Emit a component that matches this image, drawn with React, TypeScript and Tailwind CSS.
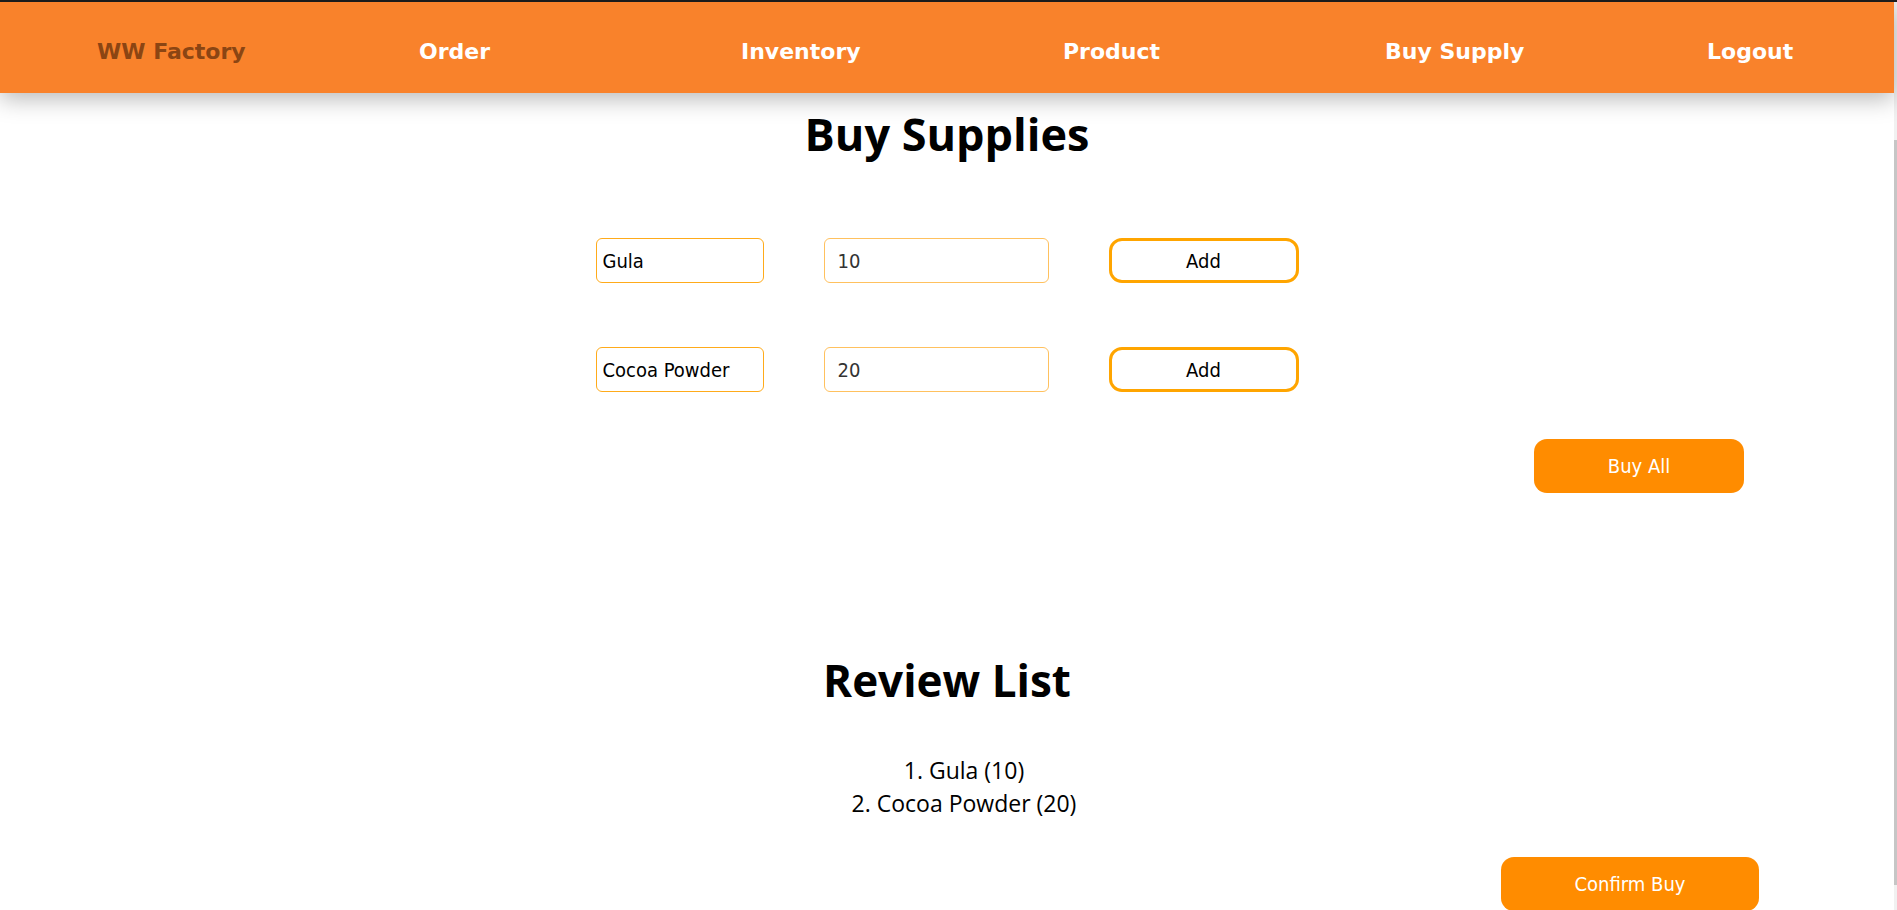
import { useState } from "react";

const links = ["Order", "Inventory", "Product", "Buy Supply", "Logout"];

export default function App() {
  const [name1, setName1] = useState("Gula");
  const [qty1, setQty1] = useState("10");
  const [name2, setName2] = useState("Cocoa Powder");
  const [qty2, setQty2] = useState("20");

  const rows = [
    { name: name1, setName: setName1, qty: qty1, setQty: setQty1 },
    { name: name2, setName: setName2, qty: qty2, setQty: setQty2 },
  ];

  return (
    <div className="h-screen overflow-hidden flex flex-col bg-white">
      <div className="h-[2px] bg-[#1e1e1e] shrink-0" />
      <div className="flex flex-1 min-h-0">
        <main className="flex-1 min-w-0 flex flex-col">
          {/* navbar */}
          <nav className="relative z-10 h-[91px] shrink-0 bg-[#f9822b] shadow-[0_6px_22px_rgba(0,0,0,0.28)] flex items-center pt-[8px] pl-[97px] overflow-hidden font-['DejaVu_Sans',sans-serif] text-[22px] font-bold">
            <a className="w-[322px] shrink-0 text-[#8b4513]">WW Factory</a>
            {links.map((l) => (
              <a key={l} className="w-[322px] shrink-0 text-white">
                {l}
              </a>
            ))}
          </nav>

          <h1 className="mt-[18px] text-center text-[45px] leading-none font-bold text-black font-['Open_Sans',sans-serif]">
            Buy Supplies
          </h1>

          <div className="mt-[82px] flex flex-col gap-[64px] font-['DejaVu_Sans_Condensed','DejaVu_Sans',sans-serif] text-[20px]">
            {rows.map((r, i) => (
              <div key={i} className="flex justify-center gap-[60px]">
                <input
                  className="w-[168px] h-[45px] rounded-[6px] border border-[#ffab1a] px-[6px] text-black outline-none"
                  value={r.name}
                  onChange={(e) => r.setName(e.target.value)}
                />
                <input
                  className="w-[225px] h-[45px] rounded-[6px] border border-[#ffc15e] px-[13px] text-[#333] outline-none"
                  value={r.qty}
                  onChange={(e) => r.setQty(e.target.value)}
                />
                <button className="w-[190px] h-[45px] rounded-[13px] border-[3px] border-[#ffa500] bg-white text-black">
                  Add
                </button>
              </div>
            ))}
          </div>

          <div className="mt-[47px] flex justify-end pr-[150px]">
            <button className="w-[210px] h-[54px] rounded-[13px] bg-[#ff8c00] text-white text-[20px] font-['DejaVu_Sans_Condensed','DejaVu_Sans',sans-serif]">
              Buy All
            </button>
          </div>

          <h2 className="mt-[165px] text-center text-[44px] leading-none font-bold text-black font-['Open_Sans',sans-serif]">
            Review List
          </h2>

          <div className="mt-[52px] pl-[34px] text-center text-[23px] leading-[33px] text-black font-['Open_Sans',sans-serif]">
            <div>1. Gula (10)</div>
            <div>2. Cocoa Powder (20)</div>
          </div>

          <div className="mt-[37px] flex justify-end pr-[135px]">
            <button className="w-[258px] h-[54px] shrink-0 rounded-[13px] bg-[#ff8c00] text-white text-[20px] font-['DejaVu_Sans_Condensed','DejaVu_Sans',sans-serif]">
              Confirm Buy
            </button>
          </div>
        </main>

        {/* thin scrollbar strip */}
        <div className="w-[3px] shrink-0 bg-[#f1f1f1] flex flex-col">
          <div className="mt-[138px] h-[745px] bg-[#c6c6c6]" />
        </div>
      </div>
    </div>
  );
}
